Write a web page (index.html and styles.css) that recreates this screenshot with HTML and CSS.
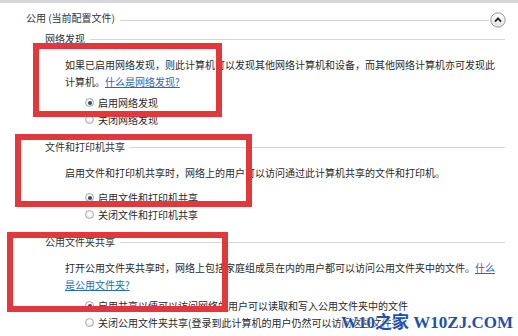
FILE: index.html
```html
<!DOCTYPE html>
<html lang="zh-CN">
<head>
    <meta charset="UTF-8">
    <title>高级共享设置</title>
    <link rel="stylesheet" href="styles.css">
</head>
<body>
    <div class="page">
        <div class="groupTitle">
            <span>公用 (当前配置文件)</span>
            <i class="rule"></i>
            <span class="collapse">
                <svg width="16" height="16" viewBox="0 0 16 16">
                    <defs>
                        <linearGradient id="g" x1="0" y1="0" x2="0" y2="1">
                            <stop offset="0" stop-color="#ffffff"/>
                            <stop offset="1" stop-color="#e2e2e2"/>
                        </linearGradient>
                    </defs>
                    <circle cx="8" cy="8" r="7.2" fill="url(#g)" stroke="#9a9a9a" stroke-width="1"/>
                    <path d="M5 9.6 L8 6.4 L11 9.6" fill="none" stroke="#222" stroke-width="1.8"/>
                </svg>
            </span>
        </div>

        <div class="section first">
            <div class="heading"><span>网络发现</span><i class="rule"></i></div>
            <p>如果已启用网络发现，则此计算机可以发现其他网络计算机和设备，而其他网络计算机亦可发现此计算机。<a href="#">什么是网络发现?</a></p>
            <div class="options">
                <label><span class="radio on"></span>启用网络发现</label>
                <label><span class="radio"></span>关闭网络发现</label>
            </div>
        </div>

        <div class="section">
            <div class="heading"><span>文件和打印机共享</span><i class="rule"></i></div>
            <p>启用文件和打印机共享时，网络上的用户可以访问通过此计算机共享的文件和打印机。</p>
            <div class="options wide">
                <label><span class="radio on"></span>启用文件和打印机共享</label>
                <label><span class="radio"></span>关闭文件和打印机共享</label>
            </div>
        </div>

        <div class="section">
            <div class="heading"><span>公用文件夹共享</span><i class="rule"></i></div>
            <p>打开公用文件夹共享时，网络上包括家庭组成员在内的用户都可以访问公用文件夹中的文件。<a href="#">什么是公用文件夹?</a></p>
            <div class="options">
                <label><span class="radio on"></span>启用共享以便可以访问网络的用户可以读取和写入公用文件夹中的文件</label>
                <label><span class="radio"></span>关闭公用文件夹共享(登录到此计算机的用户仍然可以访问这些文件夹)</label>
            </div>
        </div>

        <!-- annotation boxes drawn over the dialog -->
        <div class="mark m1"></div>
        <div class="mark m2"></div>
        <div class="mark m3"></div>

        <div class="stamp">W10之家 W10ZJ.COM</div>
    </div>
</body>
</html>
```

FILE: styles.css
```css
body{
    margin: 0;
    background: #ffffff;
    font-family: "Noto Sans CJK SC", "Noto Sans", sans-serif;
    font-size: 10px;
    color: #2a2a2a;
}
.page{
    position: relative;
    width: 518px;
    height: 336px;
    overflow: hidden;
    border-top: 3px solid #d4d6d9;
    box-sizing: border-box;
}
.rule{
    flex: 1;
    height: 1px;
    background: #d6d6d6;
    margin-left: 5px;
}
.groupTitle{
    display: flex;
    align-items: center;
    height: 14px;
    margin-top: 8px;
    padding-left: 26px;
    padding-right: 12px;
    line-height: 14px;
    color: #333;
}
.groupTitle .rule{
    margin-top: 4px;
}
.collapse{
    display: flex;
    margin-left: 1px;
    margin-top: 4px;
}
.section{
    padding-left: 45px;
    padding-right: 13px;
}
.heading{
    display: flex;
    align-items: center;
    height: 14px;
    line-height: 14px;
    margin-top: 12px;
    color: #333;
}
.section.first .heading{
    margin-top: 7px;
}
.section p{
    margin: 10px 0 0 20px;
    line-height: 17px;
    width: 432px;
}
.section a{
    color: #2b68b5;
    text-decoration: underline;
}
.options{
    margin: 4px 0 0 40px;
}
.options.wide{
    margin-top: 8px;
}
.options label{
    display: flex;
    align-items: center;
    height: 17px;
    white-space: nowrap;
}
.radio{
    width: 9px;
    height: 9px;
    border: 1px solid #a9a9a9;
    border-radius: 50%;
    background: radial-gradient(circle at 50% 40%, #ffffff 20%, #dcdcdc 100%);
    margin-right: 4px;
    box-sizing: border-box;
    position: relative;
}
.radio.on::after{
    content: "";
    position: absolute;
    left: 2px;
    top: 2px;
    width: 4px;
    height: 4px;
    border-radius: 50%;
    background: #2d4e78;
}
.mark{
    position: absolute;
    border: 6px solid #e2383c;
    box-sizing: border-box;
}
.m1{
    left: 33px;
    top: 40px;
    width: 189px;
    height: 74px;
}
.m2{
    left: 15px;
    top: 131px;
    width: 237px;
    height: 73px;
}
.m3{
    left: 7px;
    top: 229px;
    width: 221px;
    height: 80px;
}
.stamp{
    position: absolute;
    right: 5px;
    bottom: 3px;
    font-family: "Liberation Serif", "Noto Sans CJK SC", serif;
    font-weight: bold;
    font-size: 17px;
    color: #1d52a8;
    text-shadow: 0 0 2px #fff, 0 0 2px #fff;
    white-space: nowrap;
}
```
